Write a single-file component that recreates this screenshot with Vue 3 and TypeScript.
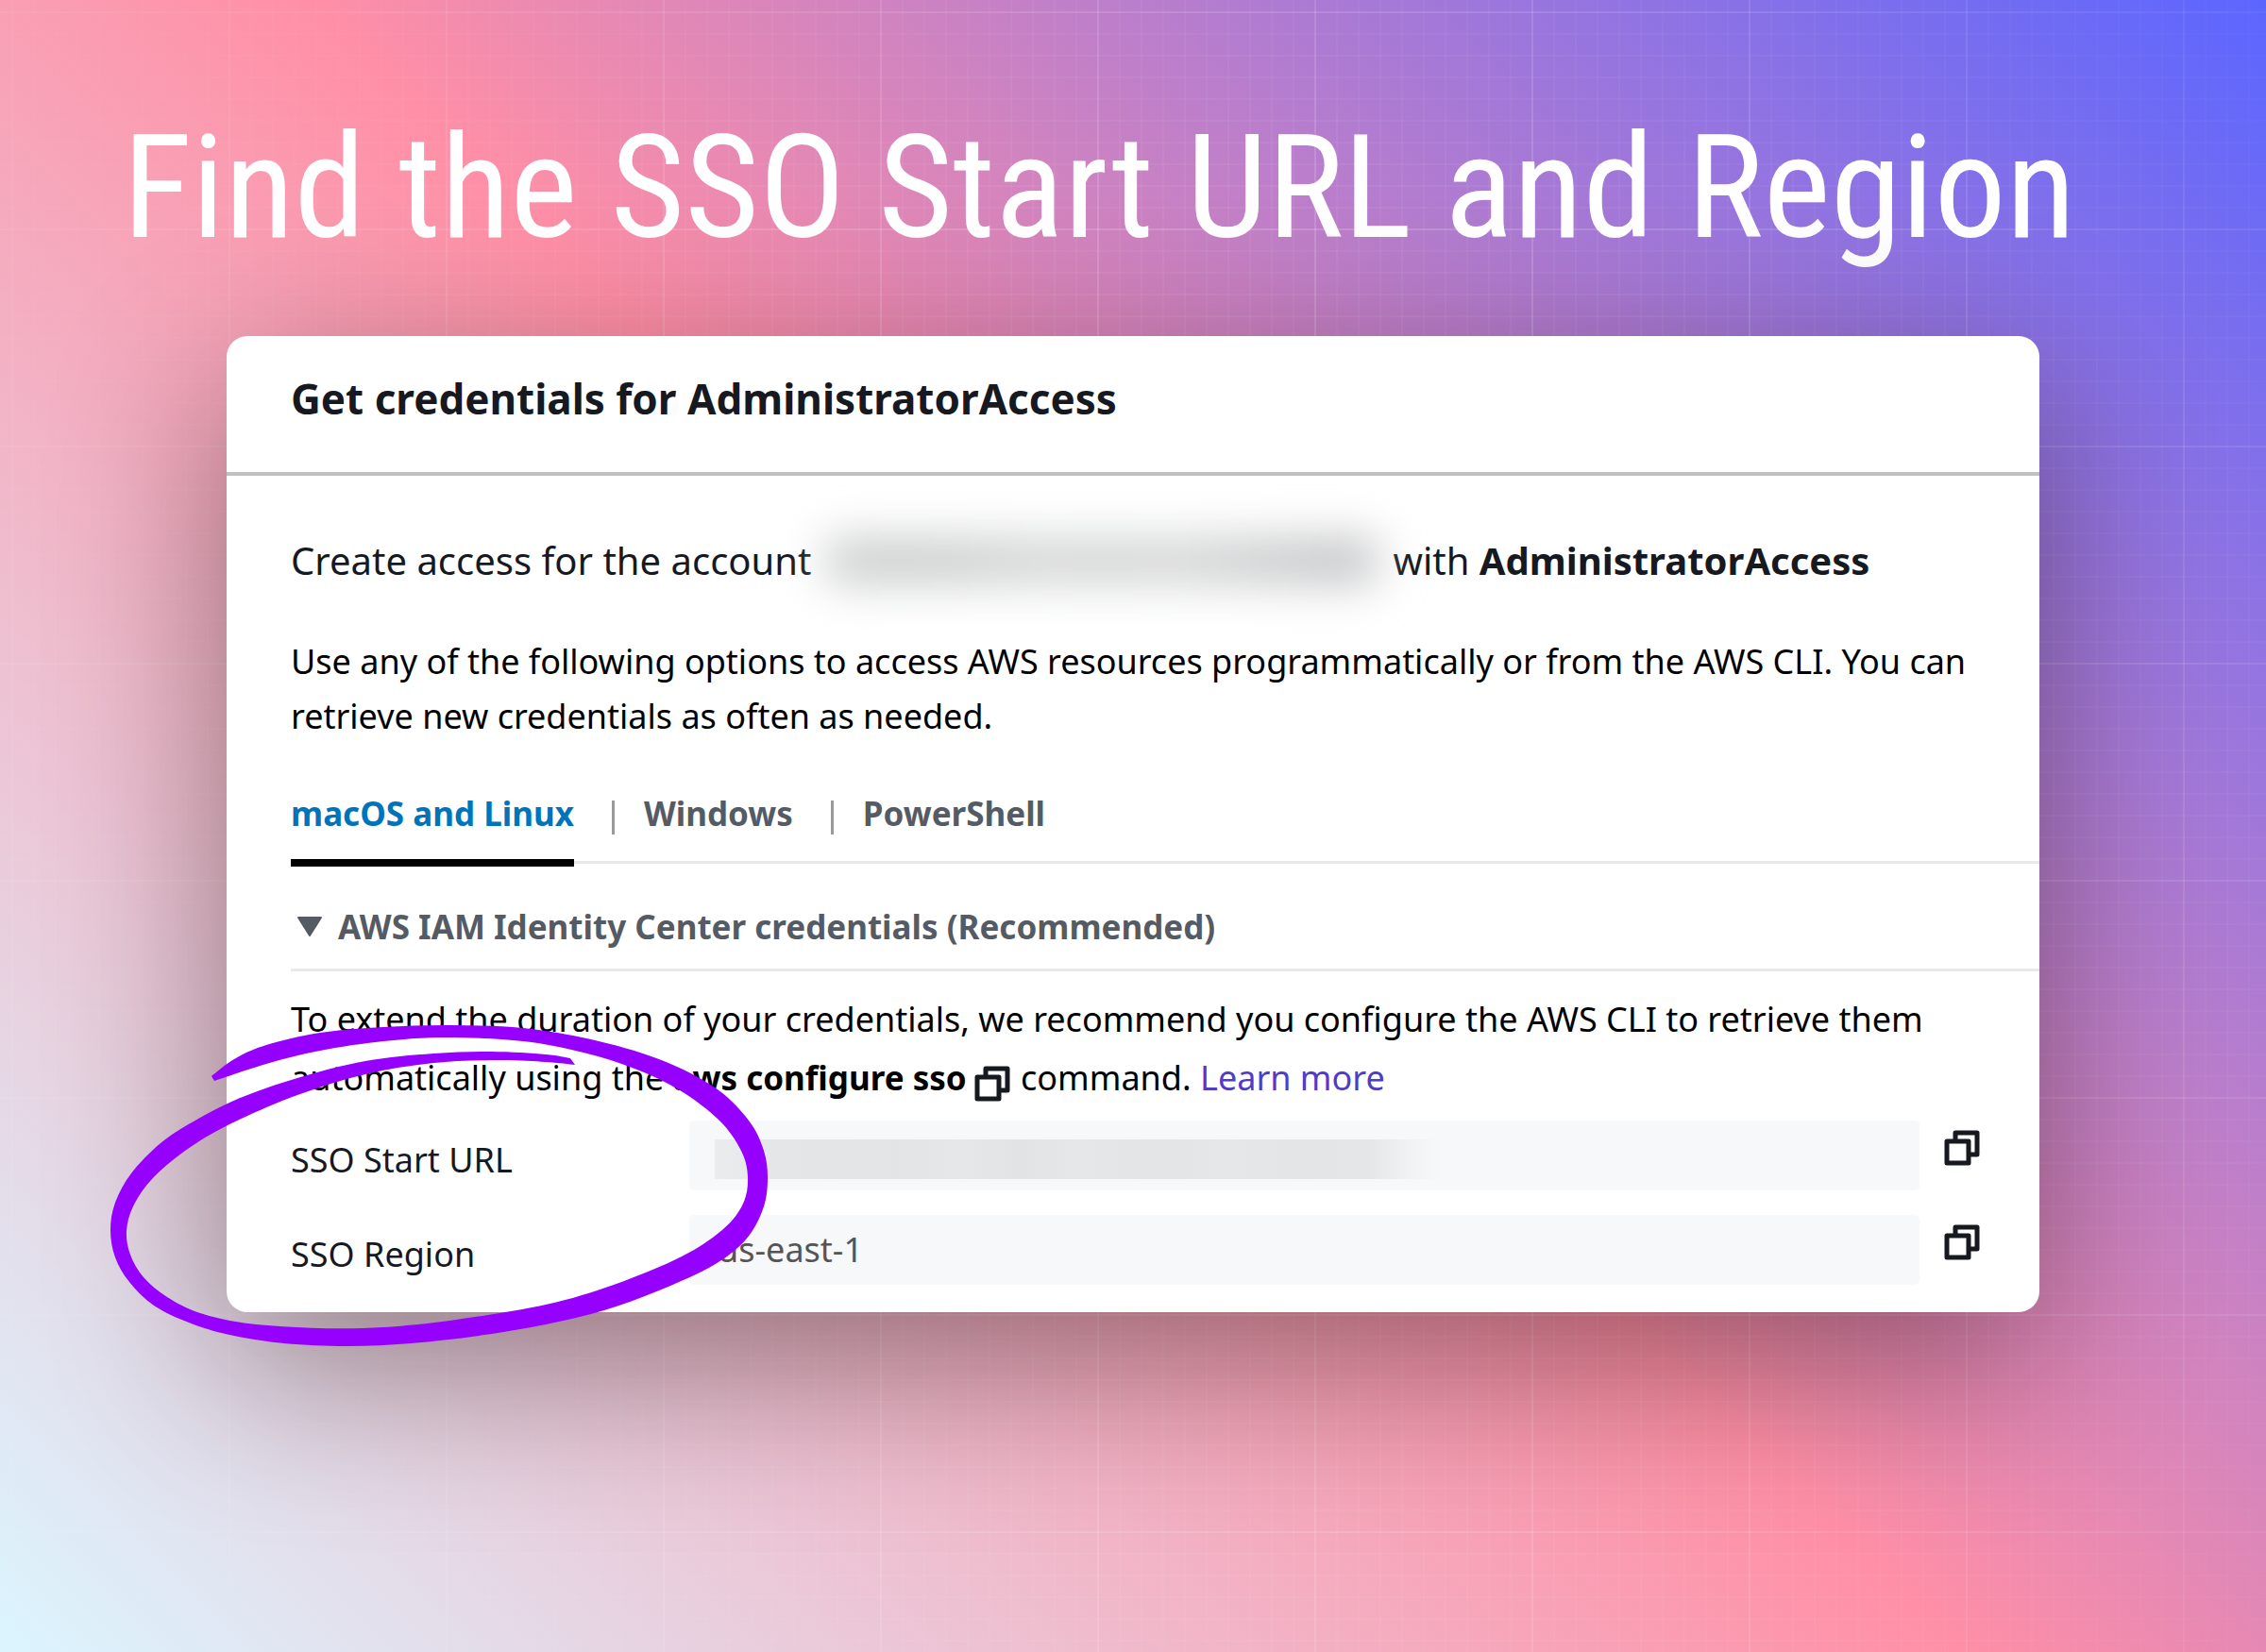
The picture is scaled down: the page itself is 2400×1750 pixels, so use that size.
<script setup lang="ts">
type Point = [number, number]

interface Field {
  id: string
  label: string
  value: string
}

const tabs = ['macOS and Linux', 'Windows', 'PowerShell']

const fields: Field[] = [
  { id: 'start-url', label: 'SSO Start URL', value: '' },
  { id: 'region', label: 'SSO Region', value: 'us-east-1' },
]

// Hand-drawn ring: the outer edge of the stroke, then the inner edge back to the start.
const outerEdge: Point[] = [
  [224, 1140], [248, 1122], [282, 1107], [339, 1094], [406, 1088], [478, 1086], [554, 1089], [626, 1101],
  [698, 1122], [757, 1152], [793, 1187], [809, 1219], [813, 1250], [808, 1281], [790, 1313], [756, 1340],
  [698, 1367], [640, 1388], [578, 1403], [507, 1415], [435, 1423], [368, 1426], [301, 1423], [243, 1414],
  [200, 1401], [163, 1383], [137, 1358], [122, 1332], [117, 1303], [122, 1274], [139, 1243], [170, 1211],
  [205, 1188], [252, 1164], [315, 1142], [387, 1124], [459, 1116], [521, 1114], [578, 1117], [604, 1121],
]
const innerEdge: Point[] = [
  [609, 1128], [578, 1125], [530, 1123], [459, 1126], [387, 1138], [315, 1160], [243, 1191], [196, 1219],
  [161, 1249], [141, 1278], [134, 1304], [138, 1329], [152, 1353], [177, 1374], [212, 1391], [263, 1402],
  [339, 1407], [406, 1406], [483, 1398], [578, 1382], [650, 1361], [722, 1331], [766, 1302], [787, 1275],
  [792, 1247], [785, 1219], [762, 1187], [720, 1155], [672, 1132], [618, 1115], [554, 1103], [473, 1099],
  [406, 1103], [339, 1113], [282, 1127], [227, 1145],
]

function smooth(points: Point[]): string {
  const last = points.length - 1
  let d = ''
  for (let i = 0; i < last; i++) {
    const a = points[Math.max(i - 1, 0)]
    const b = points[i]
    const c = points[i + 1]
    const e = points[Math.min(i + 2, last)]
    d += `C${b[0] + (c[0] - a[0]) / 6} ${b[1] + (c[1] - a[1]) / 6} `
    d += `${c[0] - (e[0] - b[0]) / 6} ${c[1] - (e[1] - b[1]) / 6} ${c[0]} ${c[1]}`
  }
  return d
}

const ringPath = `M${outerEdge[0].join(' ')}${smooth(outerEdge)}L${innerEdge[0].join(' ')}${smooth(innerEdge)}Z`
</script>

<template>
  <main class="page">
    <h1 class="headline">Find the SSO Start URL and Region</h1>

    <section class="card">
      <header class="card-head">
        <h2>Get credentials for AdministratorAccess</h2>
      </header>

      <div class="card-body">
        <p class="account">
          <span>Create access for the account</span>
          <span class="redacted" aria-hidden="true"></span>
          <span>with <strong>AdministratorAccess</strong></span>
        </p>
        <p class="intro">
          Use any of the following options to access AWS resources programmatically or from the AWS CLI. You can
          retrieve new credentials as often as needed.
        </p>

        <nav class="tabs">
          <button v-for="(tab, i) in tabs" :key="tab" type="button" :class="{ active: i === 0 }">{{ tab }}</button>
        </nav>

        <button type="button" class="expander">
          <svg width="28" height="22" viewBox="0 0 28 22" aria-hidden="true">
            <path d="M2 1H26L14 20Z" fill="#545b64" stroke="#545b64" stroke-width="2" stroke-linejoin="round" />
          </svg>
          AWS IAM Identity Center credentials (Recommended)
        </button>

        <p class="hint">
          To extend the duration of your credentials, we recommend you configure the AWS CLI to retrieve them<br />
          automatically using the <strong>aws configure sso</strong>
          <button type="button" class="copy" aria-label="Copy command">
            <svg width="38" height="38" viewBox="0 0 38 38">
              <path d="M3 12H26V35H3Z M12 12V3H35V26H27" />
            </svg>
          </button>
          command. <a href="#">Learn more</a>
        </p>

        <div v-for="field in fields" :key="field.id" class="field">
          <label :for="field.id">{{ field.label }}</label>
          <div class="box">
            <input :id="field.id" type="text" readonly :value="field.value" />
            <span v-if="!field.value" class="smear" aria-hidden="true"></span>
          </div>
          <button type="button" class="copy" :aria-label="'Copy ' + field.label">
            <svg width="38" height="38" viewBox="0 0 38 38">
              <path d="M3 12H26V35H3Z M12 12V3H35V26H27" />
            </svg>
          </button>
        </div>
      </div>

      <svg class="ring" width="720" height="360" viewBox="110 1080 720 360" aria-hidden="true">
        <path :d="ringPath" fill="#9500ff" />
      </svg>
    </section>
  </main>
</template>

<style>
body {
  margin: 0;
}
</style>

<style scoped>
.page {
  position: relative;
  box-sizing: border-box;
  min-height: 100vh;
  overflow: hidden;
  padding: 104px 10% 360px;
  font-family: 'Noto Sans', 'Open Sans', sans-serif;
  color: #16191f;
  background: linear-gradient(45deg, #dbf5ff 0%, #ff8fa6 50%, #5b66ff 100%);
}

.page::before {
  content: '';
  position: absolute;
  inset: 0;
  background-image:
    linear-gradient(90deg, rgba(255, 255, 255, 0.12) 2px, transparent 2px),
    linear-gradient(rgba(255, 255, 255, 0.12) 2px, transparent 2px),
    linear-gradient(90deg, rgba(255, 255, 255, 0.05) 2px, transparent 2px),
    linear-gradient(rgba(255, 255, 255, 0.05) 2px, transparent 2px);
  background-size: 230px 230px, 230px 230px, 23px 23px, 23px 23px;
  background-position: 12px 12px;
  mask-image: radial-gradient(circle at 55% 50%, #000 40%, rgba(0, 0, 0, 0.3) 90%);
}

.headline {
  position: relative;
  margin: 0 -110px 62px;
  font: 400 152px/190px 'Roboto Condensed', 'Liberation Sans Narrow', Roboto, sans-serif;
  color: #fff;
  white-space: nowrap;
}

h2,
p {
  margin: 0;
}

button {
  padding: 0;
  border: 0;
  background: none;
  font: inherit;
  color: inherit;
}

.card {
  position: relative;
  border-radius: 22px;
  background: #fff;
  box-shadow: 0 56px 180px rgba(20, 10, 10, 0.42);
}

.card-head {
  padding: 36px 68px 48px;
  border-bottom: 4px solid #c0c0c0;
}

h2 {
  font-size: 44px;
  line-height: 60px;
  font-weight: 700;
}

.card-body {
  padding: 60px 0 29px 68px;
}

.account {
  display: flex;
  gap: 16px;
  font-size: 40px;
  line-height: 60px;
}

.redacted {
  width: 584px;
  height: 48px;
  margin-top: 6px;
  border-radius: 8px;
  background: linear-gradient(90deg, #cacbcb, #c9cbcb 20%, #d3d4d4 42%, #cfd0d0 52%, #d4d5d5 60%, #c2c3c5 92%);
  filter: blur(24px);
}

.intro {
  margin-top: 48px;
  padding-right: 68px;
  font-size: 36px;
  line-height: 58px;
  color: #000;
}

.tabs {
  display: flex;
  margin-top: 54px;
  height: 70px;
  border-bottom: 3px solid #e9e9e9;
}

.tabs button {
  display: flex;
  align-items: flex-start;
  box-sizing: border-box;
  height: 76px;
  font-size: 35px;
  line-height: 40px;
  font-weight: 700;
  color: #545b64;
}

.tabs button.active {
  color: #0073bb;
  border-bottom: 8px solid #000;
}

.tabs button + button {
  margin-left: 40px;
}

.tabs button + button::before {
  content: '';
  width: 3px;
  height: 36px;
  margin: 6px 31px 0 0;
  background: #9a9a9a;
}

.expander {
  display: flex;
  align-items: center;
  gap: 16px;
  width: 100%;
  margin-top: 47px;
  padding: 0 0 24px 6px;
  border-bottom: 3px solid #e9e9e9;
  font-size: 35px;
  line-height: 40px;
  font-weight: 700;
  color: #545b64;
}

.hint {
  margin-top: 20px;
  font-size: 36px;
  line-height: 62px;
  color: #000;
}

.hint strong {
  font-size: 35px;
}

.hint a {
  color: #4f3cc9;
  text-decoration: none;
}

.copy svg {
  display: block;
  fill: none;
  stroke: #16191f;
  stroke-width: 5;
  stroke-linejoin: round;
}

.hint .copy {
  margin: 0 2px 0 8px;
  padding-top: 6px;
  vertical-align: middle;
}

.field {
  display: flex;
  align-items: flex-start;
  margin-top: 14px;
  padding-right: 63px;
  font-size: 36px;
  line-height: 74px;
}

.field + .field {
  margin-top: 26px;
}

.field label {
  width: 422px;
  margin-top: 5px;
  margin-bottom: -5px;
}

.box {
  position: relative;
  flex: 1;
  display: flex;
}

.box input {
  box-sizing: border-box;
  width: 100%;
  height: 74px;
  padding: 0 30px;
  border: 0;
  border-radius: 5px;
  outline: 0;
  background: #f6f8fa;
  font: inherit;
  color: #555;
}

.smear {
  position: absolute;
  top: 20px;
  left: 27px;
  width: 770px;
  height: 42px;
  background: linear-gradient(90deg, #ebeced, #e5e6e7 8%, #e3e4e5 25%, #e6e7e8 34%, #e2e3e4 42%, #e6e7e8 50%, #e3e4e5 62%, #e6e7e8 70%, #e4e5e6 80%, #e5e6e7 90%, #f1f3f5 96%, #f6f8fa);
}

.field .copy {
  margin: 10px 0 0 26px;
}

.ring {
  position: absolute;
  left: -130px;
  bottom: -50px;
  pointer-events: none;
}
</style>
